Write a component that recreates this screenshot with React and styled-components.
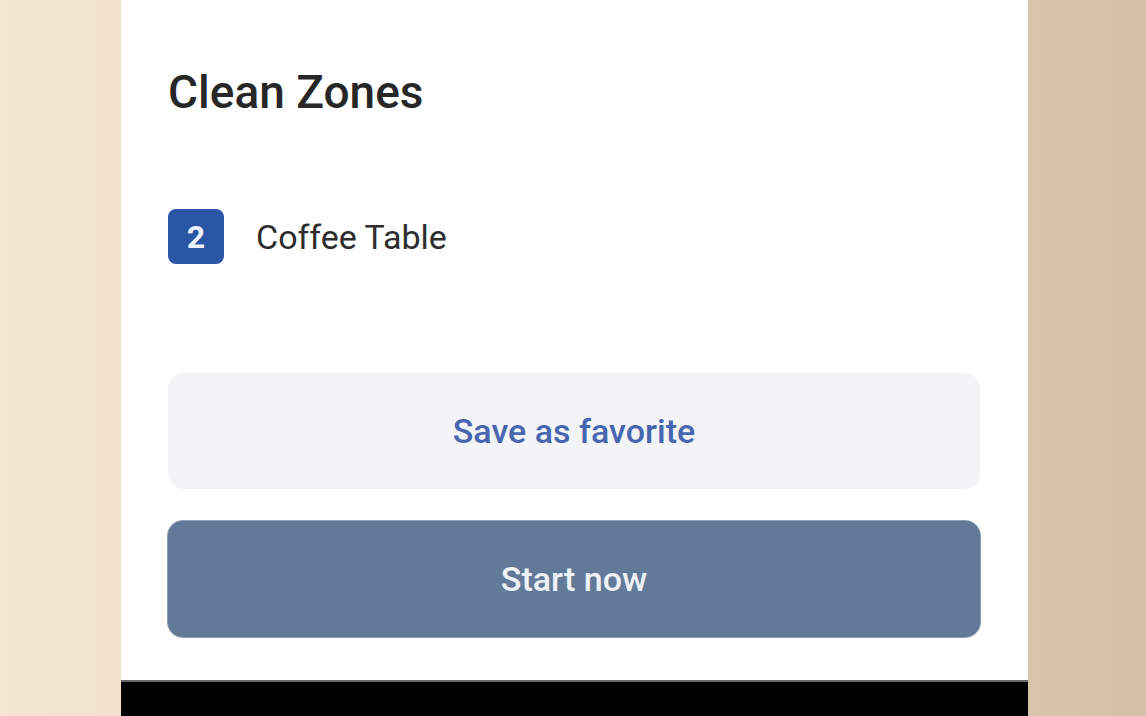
import React from "react";
import styled, { createGlobalStyle } from "styled-components";

const GlobalStyle = createGlobalStyle`
  html, body {
    margin: 0;
    padding: 0;
    height: 100%;
  }
  body {
    font-family: Roboto, "Liberation Sans", Arial, sans-serif;
    background: linear-gradient(90deg, #f5e6d0 0%, #f2e2cb 12%, #d8c5ab 88%, #d3c0a5 100%);
  }
`;

const Page = styled.div`
  display: flex;
  height: 100vh;
  padding: 0 118px 0 121px;
  box-sizing: border-box;
`;

const Panel = styled.div`
  flex: 1;
  display: flex;
  flex-direction: column;
`;

const Sheet = styled.div`
  flex: 0 0 680px;
  background: #ffffff;
  padding: 64px 48px 0 47px;
  box-sizing: border-box;
  display: flex;
  flex-direction: column;
`;

const Footer = styled.div`
  flex: 1;
  background: #000000;
  border-top: 2px solid #6a6a6a;
`;

const Title = styled.h1`
  margin: 0;
  font-size: 46px;
  line-height: 56px;
  font-weight: 500;
  color: #272727;
`;

const ZoneList = styled.div`
  display: flex;
  flex-direction: column;
  margin-top: 89px;
`;

const ZoneRow = styled.div`
  display: flex;
  align-items: center;
  gap: 32px;
`;

const Badge = styled.span`
  display: flex;
  align-items: center;
  justify-content: center;
  width: 56px;
  height: 55px;
  border-radius: 8px;
  background: #2b56a6;
  color: #eef2fa;
  font-size: 32px;
  font-weight: 700;
`;

const ZoneName = styled.span`
  font-size: 34px;
  color: #2e2e2e;
  font-weight: 400;
`;

const Actions = styled.div`
  display: flex;
  flex-direction: column;
  gap: 32px;
  margin-top: 109px;
`;

const Button = styled.button`
  height: 116px;
  border-radius: 15px;
  border: none;
  font-family: inherit;
  font-size: 34px;
  font-weight: 500;
  cursor: pointer;
  background: ${(p) => (p.$primary ? "#627a98" : "#f2f4f6")};
  color: ${(p) => (p.$primary ? "#eef2f7" : "#4865b0")};
  box-shadow: ${(p) => (p.$primary ? "0 0 0 1px #8ea0b8" : "none")};
`;

export default function App() {
  return (
    <>
      <GlobalStyle />
      <Page>
        <Panel>
          <Sheet>
            <Title>Clean Zones</Title>
            <ZoneList>
              <ZoneRow>
                <Badge>2</Badge>
                <ZoneName>Coffee Table</ZoneName>
              </ZoneRow>
            </ZoneList>
            <Actions>
              <Button>Save as favorite</Button>
              <Button $primary>Start now</Button>
            </Actions>
          </Sheet>
          <Footer />
        </Panel>
      </Page>
    </>
  );
}
